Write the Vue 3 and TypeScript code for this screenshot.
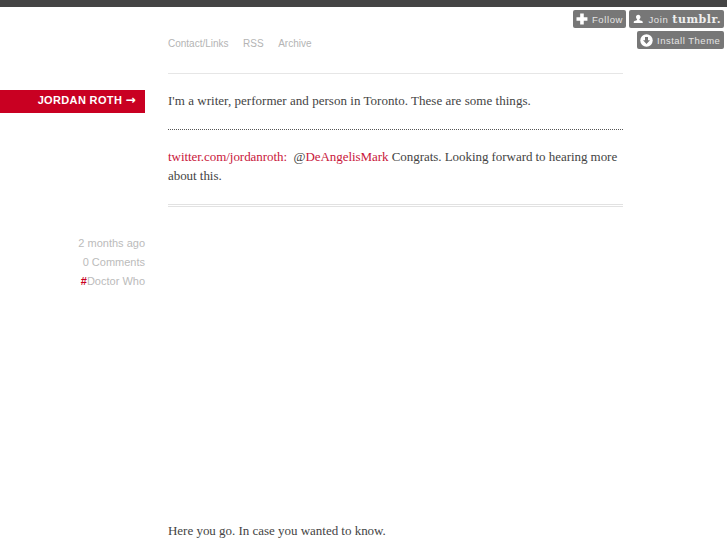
<script setup lang="ts">
const nav: string[] = ['Contact/Links', 'RSS', 'Archive']
const meta: string[] = ['2 months ago', '0 Comments']
</script>

<template>
  <div class="page">
    <div class="topbar"></div>
    <div class="controls">
      <div class="row">
        <span class="ctl follow">
          <svg width="12" height="12" viewBox="0 0 12 12"><path d="M4.2 0.5h3.6v3.7h3.7v3.6H7.8v3.7H4.2V7.8H0.5V4.2h3.700z" fill="#fff"/></svg>
          <span>Follow</span>
        </span>
        <span class="ctl join">
          <svg width="14" height="12" viewBox="0 0 14 12"><path d="M7 .3c1.900 0 3 1.300 3 3.100 0 1.300-.6 2.300-1.400 2.900-.3.900.2 1.300 1.200 1.600 1.800.5 3.200.9 3.200 2v1.600H1v-1.600c0-1.100 1.400-1.500 3.200-2 1-.3 1.500-.7 1.200-1.600C4.600 5.700 4 4.700 4 3.400 4 1.600 5.100.3 7 .3z" fill="#fff"/></svg>
          <span class="join-label">Join</span>
          <b class="logo">tumblr.</b>
        </span>
      </div>
      <div class="row">
        <span class="ctl install">
          <svg width="13" height="13" viewBox="0 0 13 13"><circle cx="6.500" cy="6.500" r="6.200" fill="#fff"/><path d="M5 3h3v3.200h2L6.500 10 3 6.200h2z" fill="#777"/></svg>
          <span>Install Theme</span>
        </span>
      </div>
    </div>
    <div class="layout">
      <aside class="side">
        <div class="name">JORDAN ROTH <span class="arrow">→</span></div>
        <div class="meta">
          <div v-for="m in meta" :key="m">{{ m }}</div>
          <div><span class="hash">#</span>Doctor Who</div>
        </div>
      </aside>
      <main class="main">
        <nav class="nav">
          <a v-for="n in nav" :key="n">{{ n }}</a>
        </nav>
        <p class="bio">I'm a writer, performer and person in Toronto. These are some things.</p>
        <p class="post">
          <a class="red">twitter.com/jordanroth</a><span class="colon">:</span>&nbsp; @<a class="red">DeAngelisMark</a> Congrats. Looking forward to hearing more about this.
        </p>
        <p class="next">Here you go. In case you wanted to know.</p>
      </main>
    </div>
  </div>
</template>

<style scoped>
.page {
  position: relative;
  width: 727px;
  height: 545px;
  overflow: hidden;
  background: #fff;
  font-family: "Liberation Sans", Arial, sans-serif;
}
.topbar {
  height: 7px;
  background: #444;
}
.controls {
  position: absolute;
  top: 10px;
  right: 3px;
  display: flex;
  flex-direction: column;
  align-items: flex-end;
  gap: 3px;
}
.row {
  display: flex;
  gap: 3px;
}
.ctl {
  display: flex;
  align-items: center;
  height: 18px;
  padding: 0 3px;
  gap: 4px;
  background: #777;
  border-radius: 2px;
  color: #e4e4e4;
  font-size: 9.5px;
  letter-spacing: 0.6px;
  box-sizing: border-box;
  white-space: nowrap;
}
.follow { width: 53px; }
.join { width: 95px; padding-left: 4px; }
.join-label { margin-left: 1px; }
.install { width: 87px; letter-spacing: 0.5px; }
.logo {
  font-family: "DejaVu Serif", serif;
  font-size: 11px;
  letter-spacing: 0.5px;
  color: #eee;
}
.layout {
  display: flex;
  gap: 23px;
}
.side {
  width: 145px;
  flex: none;
  padding-top: 83px;
}
.name {
  height: 23px;
  line-height: 21px;
  background: #c90022;
  color: #fff;
  font-size: 11px;
  font-weight: bold;
  letter-spacing: 0.35px;
  text-align: right;
  padding-right: 9px;
  box-sizing: border-box;
}
.arrow {
  font-family: "DejaVu Sans", sans-serif;
  font-size: 12px;
}
.meta {
  margin-top: 121px;
  color: #bbb;
  font-size: 11px;
  line-height: 19px;
  text-align: right;
}
.hash {
  color: #c90022;
  font-weight: bold;
}
.main {
  width: 455px;
  flex: none;
  font-family: "Liberation Serif", "Times New Roman", serif;
  font-size: 13px;
  color: #444;
}
.nav {
  display: flex;
  gap: 14.5px;
  padding-top: 30px;
  height: 36px;
  line-height: 14px;
  font-family: "Liberation Sans", Arial, sans-serif;
  font-size: 10px;
  color: #b4b4b4;
  border-bottom: 1px solid #e6e6e6;
}
.bio {
  margin: 0;
  height: 56px;
  padding-top: 18px;
  line-height: 18px;
  letter-spacing: 0.03px;
  box-sizing: border-box;
  border-bottom: 1px dotted #555;
}
.post {
  margin: 0;
  height: 77px;
  padding-top: 17px;
  line-height: 19px;
  letter-spacing: -0.05px;
  box-sizing: border-box;
  border-bottom: 3px double #e2e2e2;
}
.red, .colon { color: #c9163a; }
.next {
  margin: 314px 0 0;
  line-height: 19px;
  letter-spacing: -0.02px;
}
</style>

<style>
html, body { margin: 0; background: #fff; overflow: hidden; }
</style>
